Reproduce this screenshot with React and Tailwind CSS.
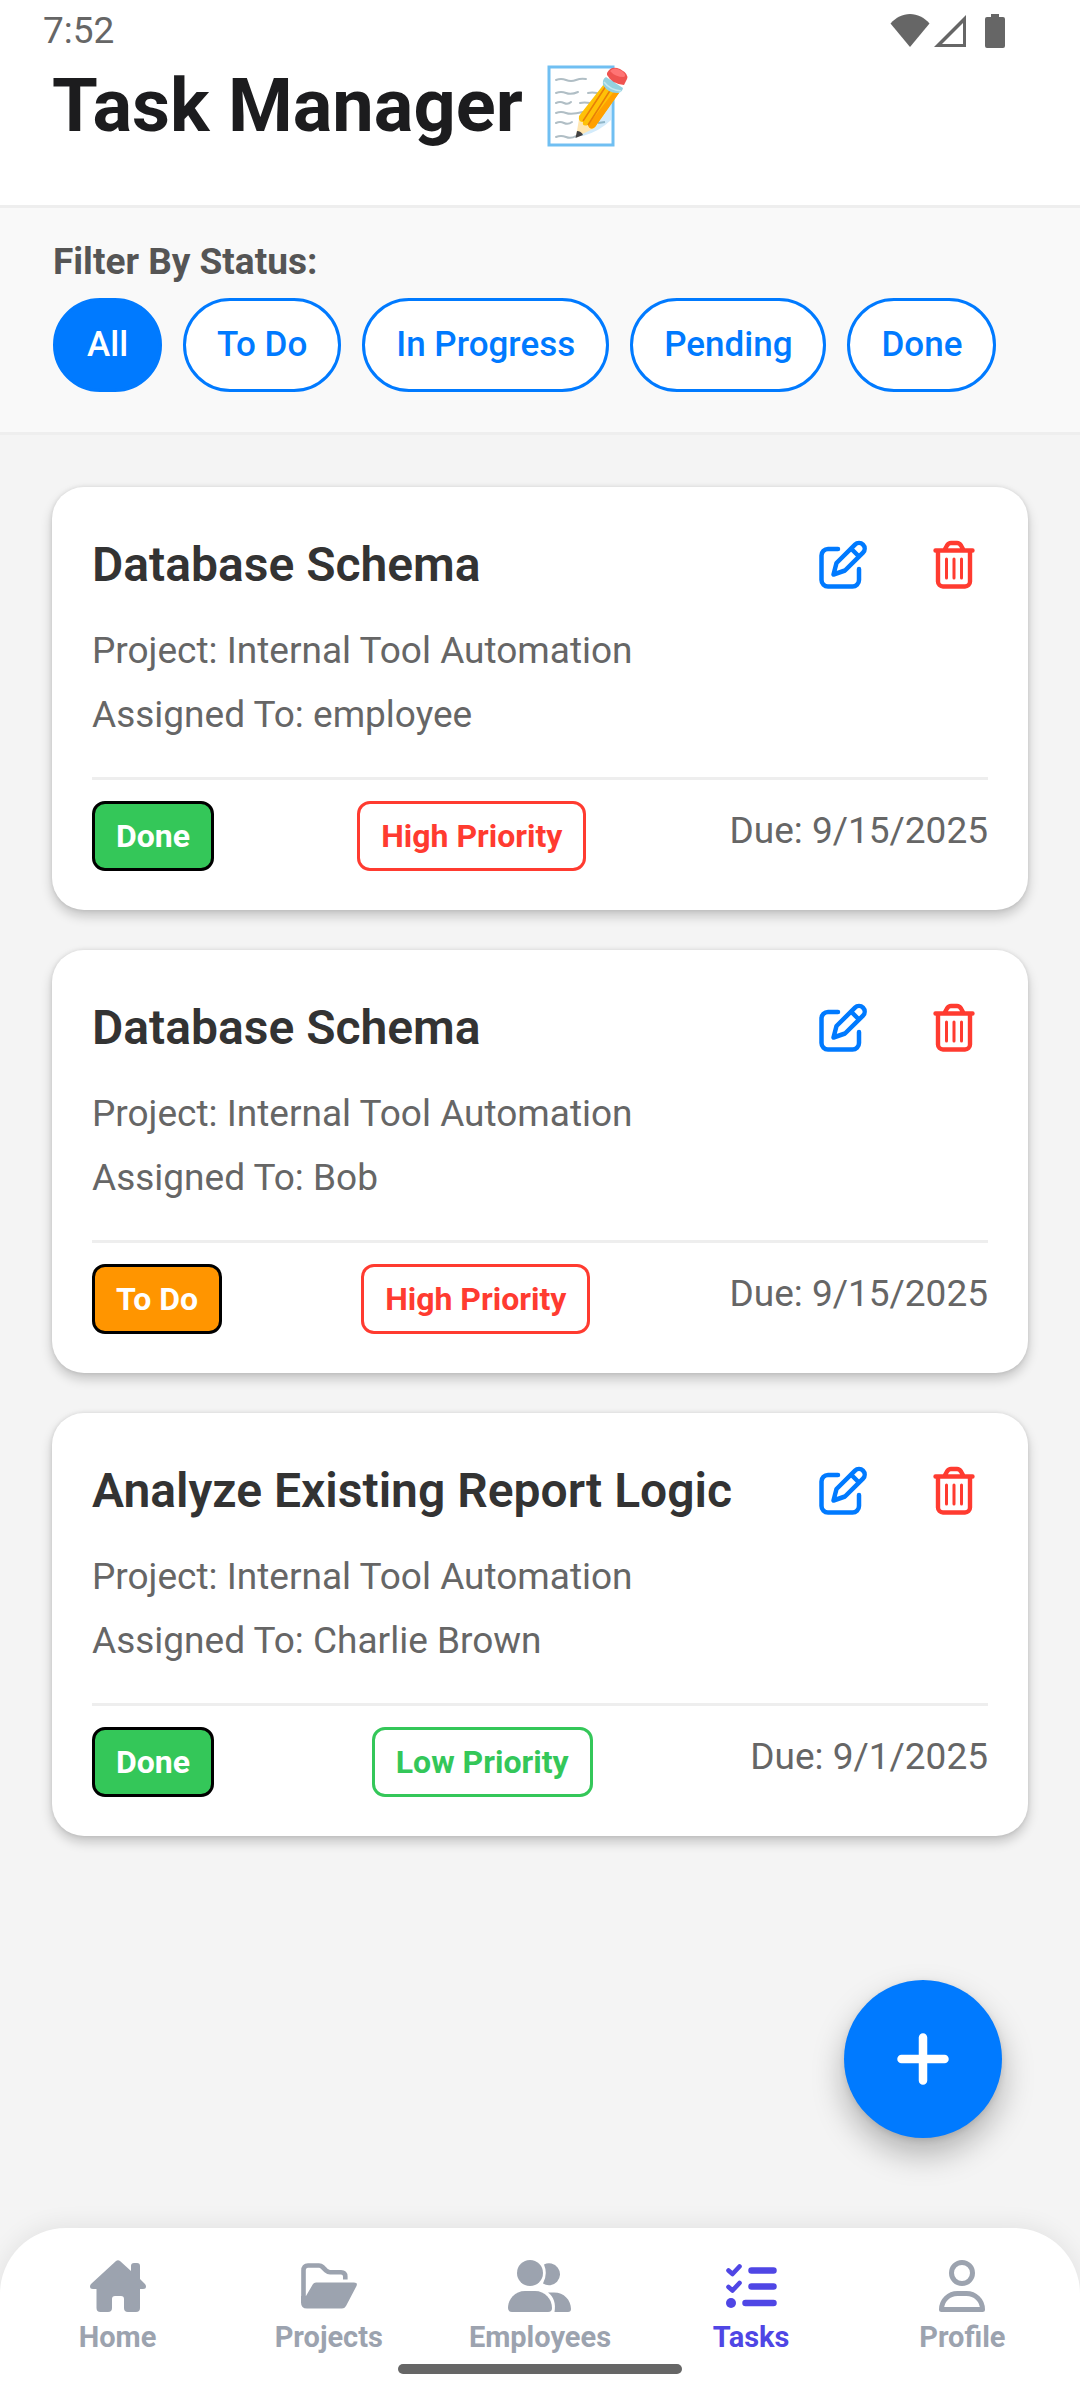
const STATUS_FILTERS = ['All', 'To Do', 'In Progress', 'Pending', 'Done']

const TASKS = [
  { id: 1, title: 'Database Schema', project: 'Internal Tool Automation', assignee: 'employee', status: 'Done', priority: 'High', due: '9/15/2025' },
  { id: 2, title: 'Database Schema', project: 'Internal Tool Automation', assignee: 'Bob', status: 'To Do', priority: 'High', due: '9/15/2025' },
  { id: 3, title: 'Analyze Existing Report Logic', project: 'Internal Tool Automation', assignee: 'Charlie Brown', status: 'Done', priority: 'Low', due: '9/1/2025' },
]

const STATUS_STYLE = { Done: 'bg-[#34c759]', 'To Do': 'bg-[#ff9500]' }
const PRIORITY_STYLE = { High: 'border-[#ff3b30] text-[#ff3b30]', Low: 'border-[#34c759] text-[#34c759]' }

function WifiIcon() {
  return (
    <svg width="40" height="34" viewBox="0 0 40 34" fill="#666" aria-hidden="true">
      <path d="M0.5 9.500C6 3.500 12.500 0 20 0s14 3.500 19.500 9.500L20 33z" />
    </svg>
  )
}

function SignalIcon() {
  return (
    <svg width="34" height="34" viewBox="0 0 34 34" fill="#666" fillRule="evenodd" aria-hidden="true">
      <path d="M1 33L33 1v32zM9 30H30V9z" />
    </svg>
  )
}

function BatteryIcon() {
  return (
    <svg width="20" height="34" viewBox="0 0 20 34" fill="#666" aria-hidden="true">
      <path d="M6 0h8v3h4a2 2 0 0 1 2 2v27a2 2 0 0 1-2 2H2a2 2 0 0 1-2-2V5a2 2 0 0 1 2-2h4z" />
    </svg>
  )
}

function MemoIcon() {
  return (
    <svg width="84" height="84" viewBox="0 0 84 84" fill="none" aria-hidden="true">
      <rect x="4" y="3" width="64" height="78" fill="#fff" stroke="#70bff2" strokeWidth="3" />
      <g stroke="#b0bec5" strokeWidth="2" strokeLinecap="round">
        <path d="M11 16q5-2 10 0t10 0t10-1" />
        <path d="M11 29q5-2 10 0t12-1M43 29q4-1 9 0" />
        <path d="M11 39q4-2 8 0t7-1M35 39q4-1 10 0" />
        <path d="M11 49q5-2 10 0t17-1" />
        <path d="M11 59q4-2 8 0t8-1" />
        <path d="M11 73q5-2 10 0t10-1" />
      </g>
      <path d="M66 32V56Q55 67 38 72L33 72z" fill="#d3ebfb" />
      <path d="M53 59l7-1" stroke="#8fb6c8" strokeWidth="2" />
      <path d="M34 55L31 73L50 64z" fill="#ffe6b1" />
      <path d="M32 67L30.500 74L38 71Q36 67 32 67z" fill="#424242" strokeLinejoin="round" />
      <path d="M59 20L74 29L50 63Q45 67 43 61Q37 63 38 58Q33 58 34 52z" fill="#ffc107" />
      <path d="M70 26L74 29L50 63Q45 67 43 61z" fill="#ffa000" />
      <path d="M61 22L38 57M66 25L43 61" stroke="#e87f08" strokeWidth="1.500" />
      <path d="M61 13Q57 15 58 21Q63 29 72 29Q77 29 78 24z" fill="#94d1e0" />
      <path d="M59 18Q65 26 76 27" stroke="#c4e7ef" strokeWidth="1.500" />
      <path d="M62 9Q66 1 75 5Q84 10 82 15L79 21Q67 20 62 11z" fill="#ef5350" />
      <path d="M65 7Q69 2 77 7Q82 11 79 13Q70 13 65 7z" fill="#ff7474" />
    </svg>
  )
}

function EditIcon() {
  return (
    <svg width="50" height="50" viewBox="0 0 50 50" fill="none" stroke="#007aff" strokeWidth="4.500" strokeLinecap="round" strokeLinejoin="round" aria-hidden="true">
      <path d="M20 9H10a6.500 6.500 0 0 0-6.500 6.500v24.500a6.500 6.500 0 0 0 6.500 6.500h24.500a6.500 6.500 0 0 0 6.500-6.500V29" />
      <path d="M37 4.700a5.600 5.600 0 0 1 8 8L27 30.500L15.500 34.500L18.500 23z" />
      <path d="M33.500 9l7 7" />
    </svg>
  )
}

function TrashIcon() {
  return (
    <svg width="44" height="50" viewBox="0 0 44 50" fill="none" stroke="#ff3b30" strokeWidth="4.400" strokeLinecap="round" strokeLinejoin="round" aria-hidden="true">
      <path d="M3.500 10.500H40.500M6 11V41.500a5 5 0 0 0 5 5H33a5 5 0 0 0 5-5V11M12.500 10L15 5.500Q16.500 3 19 3H25Q27.500 3 29 5.500L31.500 10" />
      <path d="M14.500 19V38M22 19V38M29.500 19V38" strokeWidth="3" />
    </svg>
  )
}

function HomeIcon() {
  return (
    <svg width="56" height="52" viewBox="0 0 56 52" fill="currentColor" aria-hidden="true">
      <path d="M26 1Q28 -.5 30 1L41 11V6Q41 3 44 3H47Q50 3 50 6V19L55 24Q56 25 56 26.500Q56 29 53 29H50V48Q50 52 46 52H38Q34 52 34 48V39Q34 36 31 36H25Q22 36 22 39V48Q22 52 18 52H10.500Q6.500 52 6.500 48V29H3Q0 29 0 26.500Q0 25 1 24z" />
    </svg>
  )
}

function FolderIcon() {
  return (
    <svg width="56" height="52" viewBox="0 0 56 52" fill="none" aria-hidden="true">
      <path d="M2.500 42V10.500Q2.500 5.500 7 5.500H18Q20 5.500 21.500 7L25 10.500Q27 12.200 29 12.200H40Q44.300 12.200 44.300 16.500V19.500" stroke="currentColor" strokeWidth="4.600" />
      <path d="M0 36H5L12 24Q13 22.500 15 22.500H53Q57 22.500 55.500 26L45 46Q43.500 48.500 41 48.500H6Q0 48.500 0 42.500z" fill="currentColor" />
    </svg>
  )
}

function PeopleIcon() {
  return (
    <svg width="64" height="52" viewBox="0 0 64 52" fill="currentColor" aria-hidden="true">
      <circle cx="22" cy="13" r="13" />
      <path d="M36 4.500A11 11 0 1 1 35 23.500Q40 14 36 4.500z" />
      <path d="M17 31H27C37 31 44 39 44 48Q44 52 40 52H4Q0 52 0 48C0 39 7 31 17 31z" />
      <path d="M40 32.500H46C56 32.500 63 40 63 49Q63 52 60 52H46.500C48 44 46 37 40 32.500z" />
    </svg>
  )
}

function TasksIcon() {
  return (
    <svg width="52" height="52" viewBox="0 0 52 52" fill="none" stroke="currentColor" strokeLinecap="round" strokeLinejoin="round" aria-hidden="true">
      <path d="M3.500 10.500L7.500 14L14.500 6.500M3.500 27L7.500 30.500L14.500 23" strokeWidth="4.600" />
      <path d="M26.500 10.500H48.500M26.500 26.500H48.500M20.500 43H48.500" strokeWidth="6.500" />
      <circle cx="6" cy="43" r="5" fill="currentColor" stroke="none" />
    </svg>
  )
}

function ProfileIcon() {
  return (
    <svg width="46" height="52" viewBox="0 0 46 52" fill="none" stroke="currentColor" strokeWidth="5" strokeLinejoin="round" aria-hidden="true">
      <circle cx="23" cy="13" r="10.500" />
      <path d="M18.500 33.500H27.500C36 33.500 43.500 40 43.500 49.500H2.500C2.500 40 10 33.500 18.500 33.500z" />
    </svg>
  )
}

const NAV_ITEMS = [
  { label: 'Home', Icon: HomeIcon },
  { label: 'Projects', Icon: FolderIcon },
  { label: 'Employees', Icon: PeopleIcon },
  { label: 'Tasks', Icon: TasksIcon, active: true },
  { label: 'Profile', Icon: ProfileIcon },
]

function TaskCard({ task }) {
  return (
    <article className="rounded-[32px] bg-white px-10 pt-12 pb-[39px] shadow-[0_6px_12px_rgba(0,0,0,0.2),0_0_4px_rgba(0,0,0,0.1)]">
      <div className="flex h-[60px] items-center justify-between">
        <h2 className="text-[48px] leading-[60px] font-semibold text-[#333]">{task.title}</h2>
        <div className="flex items-center gap-16 pr-3">
          <button type="button" aria-label="Edit task"><EditIcon /></button>
          <button type="button" aria-label="Delete task"><TrashIcon /></button>
        </div>
      </div>
      <p className="mt-6 text-[37px] leading-[64px] text-[#666]">Project: {task.project}</p>
      <p className="text-[37px] leading-[64px] text-[#666]">Assigned To: {task.assignee}</p>
      <div className="mt-[30px] flex items-start justify-between border-t-[3px] border-[#eee] pt-[21px]">
        <span className={`rounded-[13px] border-[3px] border-black px-[21px] py-3 text-[32px] leading-10 font-bold text-white ${STATUS_STYLE[task.status]}`}>{task.status}</span>
        <span className={`rounded-[13px] border-[3px] px-[21px] py-3 text-[32px] leading-10 font-bold ${PRIORITY_STYLE[task.priority]}`}>{task.priority} Priority</span>
        <span className="text-[37px] leading-[60px] text-[#666]">Due: {task.due}</span>
      </div>
    </article>
  )
}

export default function App() {
  return (
    <div className="flex min-h-screen flex-col bg-[#f4f4f4] font-[Roboto,sans-serif]">
      <header className="border-b-[3px] border-[#eee] bg-white pb-[55px]">
        <div className="flex h-[62px] items-center justify-between pr-[75px] pl-[43px]">
          <span className="text-[37px] leading-[44px] text-[#666]">7:52</span>
          <div className="flex items-center">
            <WifiIcon />
            <span className="ml-[3px]"><SignalIcon /></span>
            <span className="ml-[18px]"><BatteryIcon /></span>
          </div>
        </div>
        <div className="flex items-center gap-[22px] px-[52px]">
          <h1 className="text-[74px] leading-[88px] font-bold text-[#1c1c1e]">Task Manager</h1>
          <MemoIcon />
        </div>
      </header>

      <section className="border-b-[3px] border-[#eee] bg-[#f9f9f9] px-[53px] pt-8 pb-10">
        <h2 className="text-[37px] leading-[44px] font-bold text-[#555]">Filter By Status:</h2>
        <div className="mt-[14px] flex gap-[21px]">
          {STATUS_FILTERS.map((name) => (
            <button key={name} type="button" className={`h-[94px] rounded-[48px] border-[3px] border-[#007aff] px-[31px] text-[35px] leading-[44px] font-medium whitespace-nowrap ${name === 'All' ? 'bg-[#007aff] text-white' : 'bg-white text-[#007aff]'}`}>
              {name}
            </button>
          ))}
        </div>
      </section>

      <main className="flex flex-1 flex-col gap-10 px-[52px] pt-[52px]">
        {TASKS.map((task) => <TaskCard key={task.id} task={task} />)}
        <button type="button" aria-label="Add task" className="mt-auto mr-[26px] mb-[90px] flex size-[158px] items-center justify-center self-end rounded-full bg-[#007aff] shadow-[0_16px_32px_rgba(0,0,0,0.28),0_2px_6px_rgba(0,0,0,0.1)]">
          <svg width="52" height="52" viewBox="0 0 52 52" stroke="#fff" strokeWidth="8.500" strokeLinecap="round" aria-hidden="true">
            <path d="M26 4.500V47.500M4.500 26H47.500" />
          </svg>
        </button>
      </main>

      <nav className="rounded-t-[66px] bg-white px-[12px] pt-8 pb-[26px] shadow-[0_-2px_24px_rgba(0,0,0,0.08)]">
        <div className="grid grid-cols-5">
          {NAV_ITEMS.map(({ label, Icon, active }) => (
            <a key={label} href="#" className={`flex flex-col items-center gap-2 text-[29px] leading-[34px] font-bold ${active ? 'text-[#4f46e5]' : 'text-[#9ca3af]'}`}>
              <Icon />
              {label}
            </a>
          ))}
        </div>
        <div className="mx-auto mt-[10px] h-[10px] w-[284px] rounded-full bg-[#666]" />
      </nav>
    </div>
  )
}
